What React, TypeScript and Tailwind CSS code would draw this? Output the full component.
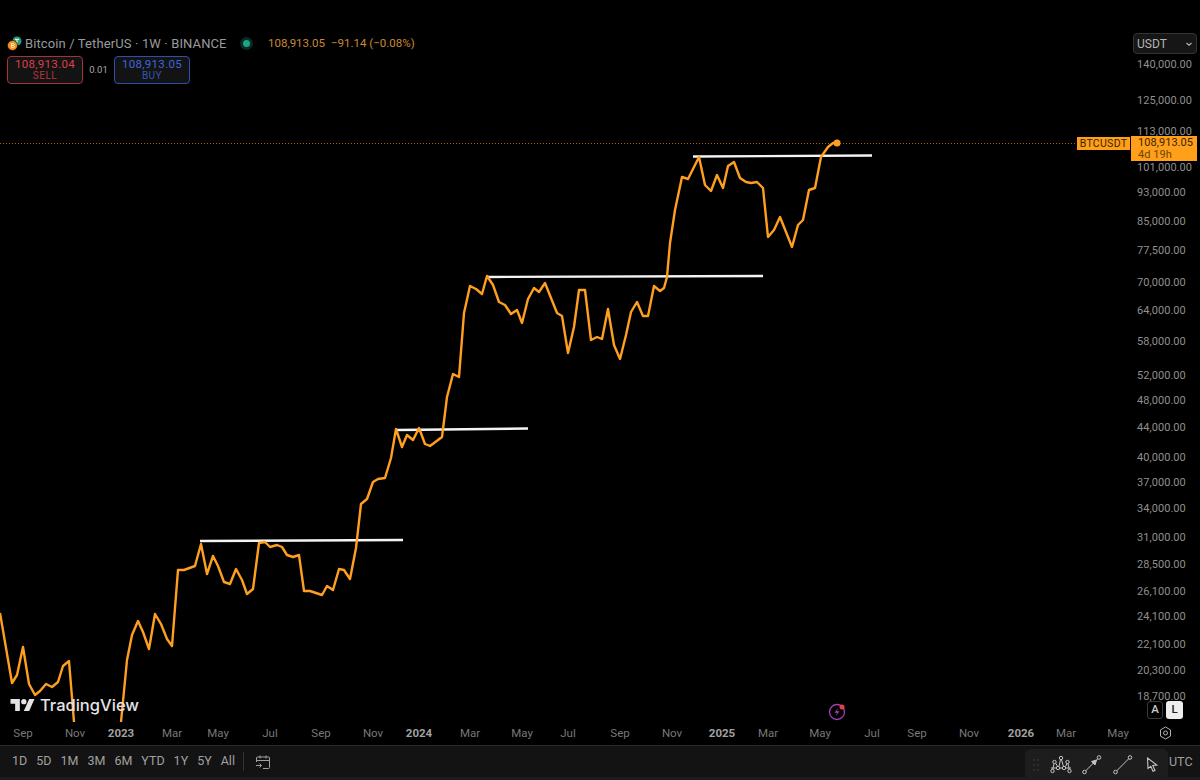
const FONT = "font-['Roboto','Liberation_Sans',sans-serif]";

const prices = [
  140000, 125000, 113000, 101000, 93000, 85000, 77500, 70000, 64000, 58000, 52000, 48000,
  44000, 40000, 37000, 34000, 31000, 28500, 26100, 24100, 22100, 20300, 18700,
];

const months: Array<[string, number, boolean?]> = [
  ["Sep", 23], ["Nov", 75], ["2023", 121, true], ["Mar", 172], ["May", 218], ["Jul", 270],
  ["Sep", 321], ["Nov", 373], ["2024", 419, true], ["Mar", 470], ["May", 522], ["Jul", 568],
  ["Sep", 620], ["Nov", 672], ["2025", 722, true], ["Mar", 768], ["May", 820], ["Jul", 872],
  ["Sep", 917], ["Nov", 969], ["2026", 1021, true], ["Mar", 1066], ["May", 1118],
];

const ranges = ["1D", "5D", "1M", "3M", "6M", "YTD", "1Y", "5Y", "All"];

// log price scale of the chart
const priceY = (p: number) => 63 + 314 * Math.log(140000 / p);

const lineA =
  "0,613 12,683 17,675 23,647 29,684 35,695 40,691 46,684 52,687 58,682 63,666 69,661 74,722";
const lineB =
  "121,722 127,660 132,635 138,621 143,632 149,649 155,614 161,624 167,639 172,646 178,570 184,570 195,566 201,544 207,574 213,556 218,566 224,582 230,584 236,569 242,580 247,594 253,589 259,543 265,542 270,547 277,545 282,547 287,555 293,557 299,555 304,591 310,591 322,595 327,586 333,590 339,569 344,570 350,579 356,548 361,504 367,499 373,482 378,479 385,478 391,458 396,429 402,447 407,435 413,440 419,428 425,444 430,446 442,437 447,397 453,374 459,377 464,313 470,286 476,289 482,294 487,276 493,285 499,302 505,305 511,314 517,310 522,323 528,299 534,288 539,292 545,283 551,298 557,313 562,316 568,353 574,327 579,290 585,290 591,340 597,337 602,339 608,309 614,345 620,359 626,335 631,312 637,302 643,316 648,316 654,286 660,291 664,288 667,277 670,243 675,210 682,177 688,179 699,157 705,185 711,191 717,175 723,188 728,166 734,162 740,178 746,182 751,183 757,182 763,188 768,237 774,230 780,217 792,247 798,225 803,220 809,190 815,188 821,157 828,147 833,143 837,143";

function ChartLines() {
  return (
    <svg width="1200" height="745" viewBox="0 0 1200 745" className="absolute left-0 top-0">
      <line x1="0" y1="143.5" x2="1078" y2="143.5" stroke="#ff9f1a" strokeOpacity="0.65" strokeWidth="1" strokeDasharray="1 2" />
      <g stroke="#f4f4f4" strokeWidth="2.4">
        <line x1="200" y1="541" x2="403" y2="540" />
        <line x1="397" y1="430" x2="528" y2="428.5" />
        <line x1="487" y1="277" x2="763" y2="276" />
        <line x1="693" y1="156.5" x2="872" y2="155.5" />
      </g>
      <g fill="none" stroke="#ff9f1f" strokeWidth="2.4" strokeLinejoin="round">
        <polyline points={lineA} />
        <polyline points={lineB} />
      </g>
      <circle cx="837" cy="143" r="3.5" fill="#ff9f1f" />
    </svg>
  );
}

function CoinIcon() {
  return (
    <svg width="15" height="15" viewBox="0 0 15 15">
      <circle cx="10" cy="5" r="4.5" fill="#26a17b" />
      <path d="M8 3.4h4M10 3.4v3.4" stroke="#fff" strokeWidth="1" />
      <circle cx="5.5" cy="9.5" r="5" fill="#f7931a" stroke="#000" strokeWidth="0.6" />
      <path d="M4.5 7.3v4.4M4.5 7.5h1.7c1.4 0 1.4 2 0 2H4.5M4.5 9.5h1.9c1.5 0 1.5 2.1 0 2.1H4.5" fill="none" stroke="#fff" strokeWidth="0.7" />
    </svg>
  );
}

function TradingViewLogo() {
  return (
    <svg width="25" height="12" viewBox="0 0 36 18" fill="#e4e4e4">
      <path d="M14 18H7V7H0V0h14v18z" />
      <circle cx="20" cy="4" r="4" />
      <path d="M36 0l-8 18h-8l8-18h8z" />
    </svg>
  );
}

function PillPrice({ price, label, cls }: { price: string; label: string; cls: string }) {
  return (
    <div className={`flex h-[28px] w-[76px] flex-col items-center justify-center rounded-[4px] border bg-[#131313] text-[11.5px] leading-[12.5px] tracking-[0.3px] ${cls}`}>
      <span>{price}</span>
      <span className="text-[10px] tracking-[0.5px] opacity-80">{label}</span>
    </div>
  );
}

function Legend() {
  return (
    <div className="absolute left-[7px] top-[36px] flex flex-col gap-[5px]">
      <div className="flex h-[15px] items-center">
        <CoinIcon />
        <span className="ml-[3px] w-[202px] whitespace-nowrap text-[13px] tracking-[0.12px] text-[#9a9a9a]">Bitcoin / TetherUS · 1W · BINANCE</span>
        <span className="ml-[13px] flex h-[13px] w-[13px] items-center justify-center rounded-full bg-[#0b2a24]">
          <span className="h-[7px] w-[7px] rounded-full bg-[#1aa583]" />
        </span>
        <span className="ml-[15px] text-[11.5px] text-[#c98a35]">108,913.05</span>
        <span className="ml-[6px] text-[11.5px] text-[#c98a35]">−91.14 (−0.08%)</span>
      </div>
      <div className="flex items-center">
        <PillPrice price="108,913.04" label="SELL" cls="border-[#a3333f] text-[#dc3f4c]" />
        <span className="w-[31px] text-center text-[9.5px] text-[#a8a8a8]">0.01</span>
        <PillPrice price="108,913.05" label="BUY" cls="border-[#2f4fb0] text-[#3f66dd]" />
      </div>
    </div>
  );
}

function PriceAxis() {
  return (
    <div className="absolute right-0 top-0 h-full w-[67px] text-[11px] tracking-[0.05px] text-[#8f8f8f]">
      {prices.map((p) => (
        <span key={p} className="absolute left-[4px] -translate-y-1/2 leading-none" style={{ top: priceY(p) + 1 }}>
          {p.toLocaleString("en-US")}.00
        </span>
      ))}
      <div className="absolute left-0 top-[33px] flex h-[21px] w-[64px] items-center justify-between rounded-[4px] border border-[#333] bg-[#161616] pl-[3px] pr-[3px] text-[12px] text-[#b5b5b5]">
        USDT
        <svg width="8" height="8" viewBox="0 0 8 8" fill="none" stroke="#b5b5b5" strokeWidth="1.1"><path d="M1.5 3l2.500 2.200L6.500 3" /></svg>
      </div>
    </div>
  );
}

function PriceTag() {
  return (
    <div className="absolute left-[1077px] top-[136px] flex items-start gap-[1px] text-[#3b2300]">
      <span className="mt-[1px] flex h-[13px] w-[53px] items-center justify-center bg-[#ff9f1a] text-[10.5px] tracking-[0.3px]">BTCUSDT</span>
      <div className="flex h-[25px] w-[66px] flex-col justify-center bg-[#ff9f1a] pl-[7px] text-[11px] leading-[12px] tracking-[0.05px]">
        <span>108,913.05</span>
        <span className="text-[#6f4500]">4d 19h</span>
      </div>
    </div>
  );
}

function TimeAxis() {
  return (
    <div className="relative h-[30px] shrink-0 text-[11.5px] text-[#787878]">
      {months.map(([name, x, bold]) => (
        <span
          key={`${name}-${x}`}
          className={`absolute top-[11px] -translate-x-1/2 leading-[14px] ${bold ? "font-bold text-[#a0a0a0]" : ""}`}
          style={{ left: x }}
        >
          {name}
        </span>
      ))}
      <svg width="13" height="14" viewBox="0 0 13 14" fill="none" stroke="#b0b0b0" strokeWidth="1" className="absolute left-[1159px] top-[11px]">
        <path d="M6.500 1l5 2.900v6.200l-5 2.900-5-2.900V3.900z" />
        <circle cx="6.500" cy="7" r="2" />
      </svg>
    </div>
  );
}

function DrawingTools() {
  return (
    <div className="absolute left-[1025px] top-[3px] flex h-[31px] w-[143px] items-center rounded-[6px] bg-[#1d1d1d] pl-[8px] text-[#c4c4c4]">
      <svg width="6" height="12" viewBox="0 0 6 12" fill="#4c4c4c">
        <circle cx="1" cy="1" r="0.7" /><circle cx="5" cy="1" r="0.7" />
        <circle cx="1" cy="6" r="0.7" /><circle cx="5" cy="6" r="0.7" />
        <circle cx="1" cy="11" r="0.7" /><circle cx="5" cy="11" r="0.7" />
      </svg>
      <svg width="22" height="20" viewBox="0 0 22 20" fill="none" stroke="currentColor" strokeWidth="1" className="ml-[11px]">
        <circle cx="2.500" cy="16" r="1.700" /><circle cx="19.500" cy="16" r="1.700" />
        <circle cx="4.500" cy="7" r="1.700" /><circle cx="11" cy="3" r="1.700" /><circle cx="17.500" cy="7" r="1.700" />
        <circle cx="8" cy="13" r="1.700" /><circle cx="14" cy="13" r="1.700" />
        <path d="M4 8.700L2.800 14.300M6 8.500l1.500 3M9 11.500l1.500-7M11.500 4.700l2 7M15.500 11.500l1.500-3M18 8.700l1.200 5.600M1 13h5.300M9.700 13h2.600M15.700 13H21" />
      </svg>
      <svg width="20" height="20" viewBox="0 0 20 20" fill="none" stroke="currentColor" strokeWidth="1" className="ml-[10px]">
        <circle cx="2.500" cy="17" r="1.800" /><circle cx="17" cy="2.500" r="1.800" />
        <path d="M3.800 15.700L15.700 3.800" />
        <path d="M9.500 6.500l5-1.500-1.500 5z" fill="currentColor" />
      </svg>
      <svg width="20" height="20" viewBox="0 0 20 20" fill="none" stroke="currentColor" strokeWidth="1" className="ml-[11px]">
        <circle cx="2.500" cy="17" r="1.800" /><circle cx="17" cy="2.500" r="1.800" />
        <path d="M3.800 15.700L15.700 3.800" />
      </svg>
      <svg width="13" height="16" viewBox="0 0 13 16" fill="none" stroke="currentColor" strokeWidth="1.100" className="ml-[13px]">
        <path d="M1.500 1l.5 10.500 2.800-2.200 2.200 5 2-.9-2.200-4.900 4-.5z" />
      </svg>
    </div>
  );
}

function BottomBar() {
  return (
    <div className="relative flex h-[32px] shrink-0 items-center border-t border-[#2a2a2a] bg-[#131313] pl-[12px] text-[12.5px] text-[#a0a0a0]">
      <div className="flex gap-[9px]">
        {ranges.map((r) => (
          <span key={r}>{r}</span>
        ))}
      </div>
      <span className="ml-[8px] h-[19px] w-px bg-[#333]" />
      <svg width="16" height="16" viewBox="0 0 16 16" fill="none" stroke="#a0a0a0" strokeWidth="1" className="ml-[11px]">
        <path d="M5 3H2.500A1 1 0 0 0 1.500 4v4M5 1.500v3M11 1.500v3M5 3h6M11 3h2.500a1 1 0 0 1 1 1v9.500a1 1 0 0 1-1 1H8M1.500 6.500h13M1 11.500h5M4.500 9.500l2 2-2 2" />
      </svg>
      <DrawingTools />
      <span className="absolute left-[1169px] top-[7px]">UTC</span>
    </div>
  );
}

export default function App() {
  return (
    <div className={`flex h-[780px] w-[1200px] flex-col overflow-hidden bg-black ${FONT}`}>
      <div className="relative flex-1">
        <ChartLines />
        <Legend />
        <PriceAxis />
        <PriceTag />
        <div className="absolute left-[10px] top-[697px] flex items-center gap-[5px]">
          <TradingViewLogo />
          <span className="font-['Inter',sans-serif] text-[16.5px] font-medium leading-none text-[#e4e4e4]">TradingView</span>
        </div>
        <svg width="18" height="18" viewBox="0 0 18 18" fill="none" className="absolute left-[828px] top-[703px]">
          <circle cx="9" cy="9" r="7.500" stroke="#9c3fb0" strokeWidth="1.300" />
          <path d="M10 5L6.500 9.800h2.500L8 13l3.500-4.800H9z" fill="#9c3fb0" />
          <circle cx="14" cy="4" r="2.500" fill="#e5404a" />
        </svg>
        <div className="absolute left-[1147px] top-[701px] flex gap-[3px] text-[11.5px] font-medium">
          <span className="flex h-[18px] w-[16px] items-center justify-center rounded-[3px] border border-[#3a3a3a] text-[#c9c9c9]">A</span>
          <span className="flex h-[18px] w-[17px] items-center justify-center rounded-[3px] bg-[#eeeeee] text-[#222]">L</span>
        </div>
      </div>
      <TimeAxis />
      <BottomBar />
      <div className="h-[3px] shrink-0 bg-[#1d1d1d]" />
    </div>
  );
}
